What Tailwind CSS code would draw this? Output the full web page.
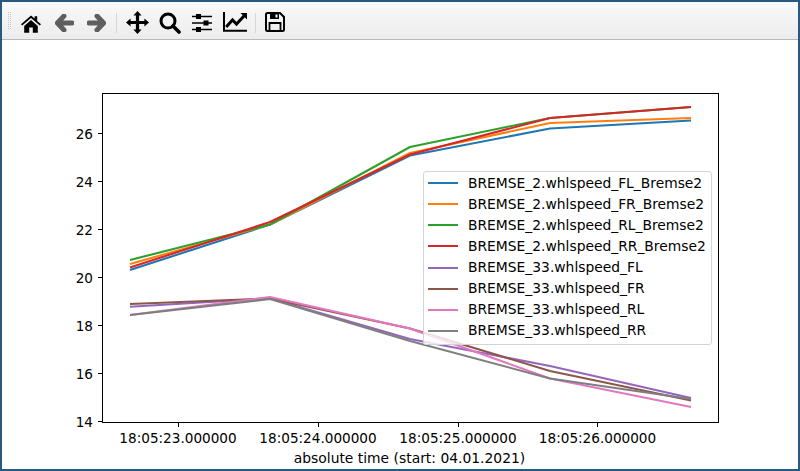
<!DOCTYPE html>
<html><head><meta charset="utf-8"><script src="https://cdn.jsdelivr.net/npm/@tailwindcss/browser@4"></script></head>
<body class="m-0 bg-white">
<div class="w-[800px] h-[471px] border-2 border-[#275a80] flex flex-col overflow-hidden font-['DejaVu_Sans',sans-serif] text-[13.85px] text-black">
  <div class="h-[38px] shrink-0 border-b border-[#b9b9b9] bg-gradient-to-b from-[#f9f9f9] to-[#ececec] flex items-center pl-[6px]">
    <div class="w-[3px] h-[17px] ml-0 border-x border-dotted border-[#c4c4c4]"></div>
    <svg viewBox="0 0 20 18" class="w-[20px] h-[18px] ml-[10px] mt-[7px]"><path d="M10 0.5 L13.6 3.6 V1.2 H16.2 V5.9 L20 9.2 L18.8 10.6 L10 3 L1.2 10.6 L0 9.2 Z M3.2 11 L10 5 L16.8 11 V17.8 H11.8 V12.4 H8.2 V17.8 H3.2 Z" fill="#000"/></svg>
    <svg viewBox="0 0 19 18" class="w-[19px] h-[18px] ml-[14px] mt-[5px]"><path d="M9 2 L2.4 9 L9 16 M3 9 H17" fill="none" stroke="#5f5f5f" stroke-width="5" stroke-linejoin="round" stroke-linecap="round"/></svg>
    <svg viewBox="0 0 19 18" class="w-[19px] h-[18px] ml-[13px] mt-[5px]"><path d="M10 2 L16.6 9 L10 16 M16 9 H2" fill="none" stroke="#5f5f5f" stroke-width="5" stroke-linejoin="round" stroke-linecap="round"/></svg>
    <div class="w-px h-[20px] ml-[10px] bg-[#d6d6d6] mt-[4px]"></div>
    <svg viewBox="0 0 23 23" class="w-[23px] h-[23px] ml-[9px] mt-[3px]"><path d="M11.5 0 L15.6 4.6 H13.1 V9.9 H18.4 V7.4 L23 11.5 L18.4 15.6 V13.1 H13.1 V18.4 H15.6 L11.5 23 L7.4 18.4 H9.9 V13.1 H4.6 V15.6 L0 11.5 L4.6 7.4 V9.9 H9.9 V4.6 H7.4 Z" fill="#000"/></svg>
    <svg viewBox="0 0 22 22" class="w-[22px] h-[22px] ml-[10px] mt-[5px]"><circle cx="9" cy="9" r="7" fill="none" stroke="#000" stroke-width="3"/><path d="M14 14 L20 20" stroke="#000" stroke-width="3.6" stroke-linecap="round"/></svg>
    <svg viewBox="0 0 20 20" class="w-[20px] h-[20px] ml-[11px] mt-[5px]"><g stroke="#000"><path d="M0 3.5 H20 M0 10 H20 M0 16.5 H20" stroke-width="1.7"/></g><rect x="4" y="1" width="5" height="5" fill="#000"/><rect x="11.5" y="7.5" width="5" height="5" fill="#000"/><rect x="4" y="14" width="5" height="5" fill="#000"/></svg>
    <svg viewBox="0 0 24 20" class="w-[24px] h-[20px] ml-[11px] mt-[3px]"><path d="M1 0 V18.8 H24" fill="none" stroke="#000" stroke-width="2"/><path d="M3.2 15 L9.5 8 L13.5 12 L21 4" fill="none" stroke="#000" stroke-width="3"/><path d="M17.5 1 H24 V7.5 Z" fill="#000"/></svg>
    <div class="w-px h-[20px] ml-[8px] bg-[#d6d6d6] mt-[4px]"></div>
    <svg viewBox="0 0 20 20" class="w-[20px] h-[20px] ml-[9px] mt-[3px]"><path d="M2.5 1 H15 L19 5 V17.5 Q19 19 17.5 19 H2.5 Q1 19 1 17.5 V2.5 Q1 1 2.5 1 Z" fill="none" stroke="#000" stroke-width="2"/><path d="M5 1.5 H14 V7 H5 Z" fill="#000"/><rect x="10.5" y="2.5" width="2" height="3" fill="#fff"/><path d="M4.5 18.5 V11 H15.5 V18.5" fill="none" stroke="#000" stroke-width="1.8"/></svg>
  </div>
  <div class="relative flex-1 bg-white">
    <svg viewBox="2 40 796 429" class="block w-[796px] h-[429px]" fill="none">
      <g stroke-width="2.08" stroke-linejoin="round">
        <polyline stroke="#1f77b4" points="130,270 270,224.5 410,155.5 550,128.5 691,120.5"/>
        <polyline stroke="#ff7f0e" points="130,264 270,224.5 410,153 550,123 691,118"/>
        <polyline stroke="#2ca02c" points="130,260 270,224.5 410,147 550,118 691,107"/>
        <polyline stroke="#d62728" points="130,267.5 270,222 410,154.5 550,118 691,107"/>
        <polyline stroke="#9467bd" points="130,306.7 270,298.5 410,339 550,366 691,398"/>
        <polyline stroke="#8c564b" points="130,304 270,298.5 410,328.5 550,371 691,400.5"/>
        <polyline stroke="#e377c2" points="130,315 270,297 410,328.5 550,378.5 691,407"/>
        <polyline stroke="#7f7f7f" points="130,315 270,299 410,341 550,378.5 691,399"/>
      </g>
      <rect x="102.5" y="93.5" width="616" height="329" stroke="#000" stroke-width="1"/>
      <path stroke="#000" d="M98 133.5H102 M98 181.5H102 M98 229.5H102 M98 277.5H102 M98 325.5H102 M98 373.5H102 M98 421.5H102 M178.5 422V427 M318.5 422V427 M458.5 422V427 M597.5 422V427"/>
      <g fill="#000" font-family="DejaVu Sans" font-size="13.6" text-anchor="end">
        <text x="93" y="138.5">26</text><text x="93" y="186.5">24</text><text x="93" y="234.5">22</text><text x="93" y="282.5">20</text><text x="93" y="330.5">18</text><text x="93" y="378.5">16</text><text x="93" y="426.5">14</text>
      </g>
      <g fill="#000" font-family="DejaVu Sans" font-size="13.6" text-anchor="middle">
        <text x="178" y="443">18:05:23.000000</text><text x="318" y="443">18:05:24.000000</text><text x="458" y="443">18:05:25.000000</text><text x="597.5" y="443">18:05:26.000000</text>
        <text x="409.5" y="463" font-size="13.89">absolute time (start: 04.01.2021)</text>
      </g>
    </svg>
    <div class="absolute left-[421px] top-[131px] w-[289px] h-[174px] bg-white/80 border border-[#d4d4d4] rounded-[3px] pl-[4px] pb-[2px] flex flex-col justify-center leading-[21.1px] whitespace-nowrap">
      <div class="flex items-center"><span class="w-[30px] h-[2px] bg-[#1f77b4] mr-[10px]"></span>BREMSE_2.whlspeed_FL_Bremse2</div>
      <div class="flex items-center"><span class="w-[30px] h-[2px] bg-[#ff7f0e] mr-[10px]"></span>BREMSE_2.whlspeed_FR_Bremse2</div>
      <div class="flex items-center"><span class="w-[30px] h-[2px] bg-[#2ca02c] mr-[10px]"></span>BREMSE_2.whlspeed_RL_Bremse2</div>
      <div class="flex items-center"><span class="w-[30px] h-[2px] bg-[#d62728] mr-[10px]"></span>BREMSE_2.whlspeed_RR_Bremse2</div>
      <div class="flex items-center"><span class="w-[30px] h-[2px] bg-[#9467bd] mr-[10px]"></span>BREMSE_33.whlspeed_FL</div>
      <div class="flex items-center"><span class="w-[30px] h-[2px] bg-[#8c564b] mr-[10px]"></span>BREMSE_33.whlspeed_FR</div>
      <div class="flex items-center"><span class="w-[30px] h-[2px] bg-[#e377c2] mr-[10px]"></span>BREMSE_33.whlspeed_RL</div>
      <div class="flex items-center"><span class="w-[30px] h-[2px] bg-[#7f7f7f] mr-[10px]"></span>BREMSE_33.whlspeed_RR</div>
    </div>
  </div>
</div>
</body></html>
